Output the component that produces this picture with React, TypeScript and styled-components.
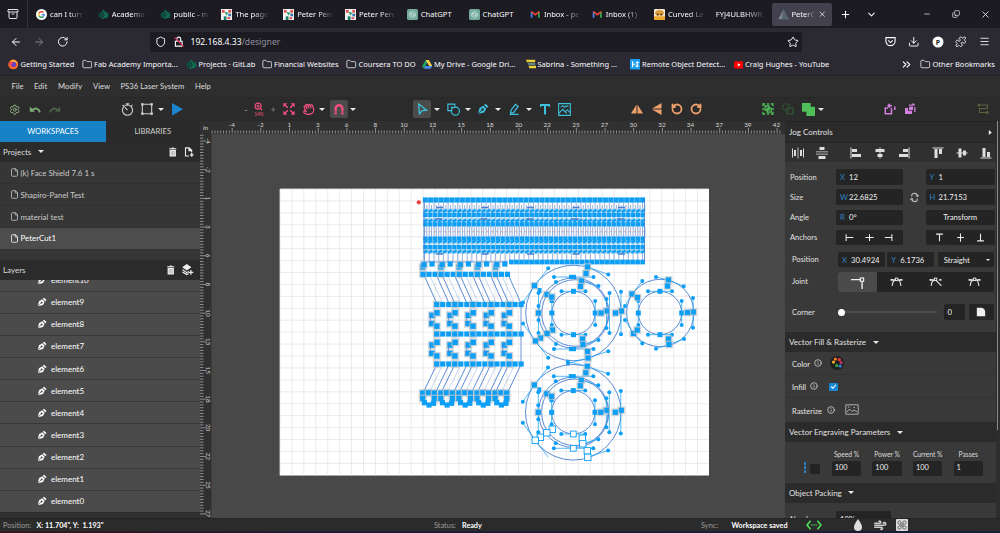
import React from 'react';
import styled, { createGlobalStyle } from 'styled-components';
import {
  Archive, ArrowLeft, ArrowRight, RotateCw, RotateCcw, Shield, Star, Download, Puzzle, Menu, Folder, ChevronsRight,
  ChevronDown, Plus, X, Minus, Copy, Settings, Hand, File, Info, Wind, ZoomIn,
} from 'lucide-react';

const Global = createGlobalStyle`
  * { box-sizing: border-box; }
  body { margin: 0; background: #484848; overflow: hidden; font-family: Lato, sans-serif; color: #dcdcdc; }
  svg { display: block; flex: none; }
`;

const Screen = styled.div`
  width: 1000px; height: 533px; display: flex; flex-direction: column; overflow: hidden;
`;

/* ---------- browser chrome ---------- */
const TabStrip = styled.div`
  height: 28px; flex: none; background: #1c1b22; display: flex; align-items: center; color: #fbfbfe;
  font: 7.6px "Noto Sans", sans-serif;
`;
const Overview = styled.div`
  width: 28px; height: 28px; border-right: 1px solid #34333c; display: flex; align-items: center; justify-content: center;
  margin-right: 2px; padding-right: 1px;
`;
const Tab = styled.div`
  width: 61.8px; height: 24px; display: flex; align-items: center; padding-left: 6px; gap: 3px; flex: none;
`;
const TabTitle = styled.span<{ $w: number; $fade?: boolean }>`
  width: ${p => p.$w}px; white-space: nowrap; line-height: 14px;
  ${p => p.$fade !== false && 'mask-image: linear-gradient(90deg, #000 58%, transparent 102%);'}
`;
const ActiveTab = styled.div`
  width: 60px; height: 23px; border-radius: 2px; background: #42414d; display: flex; align-items: center;
  padding: 0 6px 0 6px; gap: 2.5px; margin-left: 0.4px; flex: none;
`;
const ChromeIcon = styled.div<{ $w: number; $dim?: boolean }>`
  width: ${p => p.$w}px; flex: none; display: flex; justify-content: center; align-items: center;
  opacity: ${p => (p.$dim ? 0.4 : 1)};
`;
const Spacer = styled.div<{ $w?: number }>`
  ${p => (p.$w === undefined ? 'flex: 1;' : `width: ${p.$w}px; flex: none;`)}
`;
const NavBar = styled.div`
  height: 27px; flex: none; background: #2b2a33; display: flex; align-items: center; color: #fbfbfe; padding-left: 4px;
`;
const UrlField = styled.div`
  width: 652px; height: 20px; background: #1c1b22; border-radius: 2px; display: flex; align-items: center;
  font: 8.6px "Noto Sans", sans-serif; padding: 1px 1px 0 2px;
`;
const Dim = styled.span` color: #8f8f9d; `;
const Bookmarks = styled.div`
  height: 19.5px; flex: none; background: #2b2a33; color: #fbfbfe; display: flex; align-items: center; padding: 0 0 1px 8px;
  font: 7.5px "Noto Sans", sans-serif; 
`;
const Bookmark = styled.div<{ $w: number }>`
  width: ${p => p.$w}px; display: flex; align-items: center; gap: 2px; white-space: nowrap; flex: none;
`;

/* ---------- application bars ---------- */
const MenuBar = styled.div`
  height: 22px; flex: none; background: #2e2e2e; border-top: 1px solid #242424; display: flex; align-items: center;
  font-size: 7.7px; padding: 0 0 0 11.5px;
`;
const MenuItem = styled.span<{ $w: number }>` width: ${p => p.$w}px; white-space: nowrap; `;
const Toolbar = styled.div`
  height: 24.5px; flex: none; background: #2b2b2b; display: flex; align-items: center; padding: 0 0 0 5px;
  border-top: 1px solid #282828;
`;
const Tool = styled.div<{ $w: number; $c?: string; $on?: boolean; $ml?: number }>`
  width: ${p => p.$w}px; height: 18px; flex: none; display: flex; align-items: center; justify-content: center;
  margin-left: ${p => p.$ml ?? 0}px; color: ${p => p.$c ?? '#ddd'}; font-size: 9px;
  background: ${p => (p.$on ? '#4b4b4b' : 'transparent')}; border-radius: 2px;
`;
const Caret = styled.i<{ $s?: number }>`
  border: ${p => p.$s ?? 3}px solid transparent; border-top-color: #e8e8e8; border-bottom: 0; flex: none;
`;
const ZoomReadout = styled.div`
  display: flex; flex-direction: column; align-items: center; font-size: 4.8px; line-height: 5px; gap: 1px;
`;
const Main = styled.div` flex: 1; min-height: 0; display: flex; `;

/* ---------- left sidebar ---------- */
const Sidebar = styled.div` width: 200px; flex: none; display: flex; flex-direction: column; background: #363636; overflow: hidden; `;
const SideTabs = styled.div` display: flex; height: 20.5px; flex: none; border-bottom: 1px solid #1a5d8a; font-size: 7.7px; `;
const SideTab = styled.div<{ $on?: boolean }>`
  width: ${p => (p.$on ? 105.5 : 94.5)}px; height: 20.5px; display: flex; align-items: center; justify-content: center;
  background: ${p => (p.$on ? '#1783c6' : '#2a2a2a')}; color: ${p => (p.$on ? '#fff' : '#d0d0d0')};
`;
const SideHeader = styled.div<{ $h: number }>`
  height: ${p => p.$h}px; flex: none; background: #2b2b2b; display: flex; align-items: center; padding: 0 6.5px 0 3px; font-size: 8px; gap: 6.5px;
`;
const Project = styled.div<{ $on?: boolean }>`
  height: ${p => (p.$on ? 21.5 : 22)}px; flex: none; display: flex; align-items: center; gap: 1.5px; padding-left: 10px; font-size: 7.9px;
  background: ${p => (p.$on ? '#4d4d4d' : '#363636')}; color: ${p => (p.$on ? '#fff' : '#cacaca')};
  border-bottom: 1px solid #313131;
`;
const Layers = styled.div`
  height: 233px; flex: none; overflow: hidden; display: flex; flex-direction: column; justify-content: flex-end;
  border-bottom: 1px solid #2c2c2c;
`;
const Layer = styled.div`
  height: 22.15px; flex: none; background: #4b4b4b; border-top: 1px solid #383838; color: #fff; font-size: 8px;
  display: flex; align-items: center; padding-left: 37px; gap: 4px;
`;
const SideFoot = styled.div` height: 4.5px; flex: none; background: #303030; `;

/* ---------- canvas ---------- */
const Stage = styled.div` width: 585px; flex: none; overflow: hidden; background: #484848; `;

/* ---------- right panel ---------- */
const Panel = styled.div`
  flex: 1; min-width: 0; background: #393939; display: flex; flex-direction: column; overflow: hidden; font-size: 7.5px;
  border-top: 1px solid #232323;
`;
const PanelHeader = styled.div<{ $mt?: number; $h?: number }>`
  height: ${p => p.$h ?? 20}px; margin-top: ${p => p.$mt ?? 0}px; flex: none; background: #2b2b2b; display: flex; align-items: center;
  padding: 0 7px 0 4px; gap: 6.5px; font-size: 8px; color: #e2e2e2;
`;
const AlignBar = styled.div`
  height: 20px; flex: none; background: #303030; border-top: 1px solid #262626; display: flex; align-items: center; color: #e4e4e4;
`;
const Row = styled.div<{ $h: number; $mt?: number; $indent?: number; $line?: boolean }>`
  height: ${p => p.$h}px; margin-top: ${p => p.$mt ?? 0}px; padding-left: ${p => p.$indent ?? 5}px; flex: none; display: flex; align-items: center;
  ${p => p.$line && 'border-bottom: 1px solid #323232;'}
`;
const RowLabel = styled.span<{ $w: number }>` width: ${p => p.$w}px; flex: none; color: #e0e0e0; white-space: nowrap; `;
const LowLabel = styled.span` padding-top: 3px; color: #e4e4e4; `;
const Field = styled.div<{ $w: number; $ml?: number; $center?: boolean }>`
  width: ${p => p.$w}px; height: 15.5px; margin-left: ${p => p.$ml ?? 0}px; flex: none; background: #242424; border-radius: 2px;
  display: flex; align-items: center; padding: 0 4px; font-size: 7.7px; color: #eee; white-space: nowrap;
  justify-content: ${p => (p.$center ? 'space-around' : 'flex-start')};
`;
const Axis = styled.b` color: #2f86c2; font-weight: 400; width: 9px; flex: none; font-size: 7.6px; `;
const Joints = styled.div` width: 156px; height: 20px; background: #242424; display: flex; border-radius: 2px; overflow: hidden; `;
const Joint = styled.div<{ $on?: boolean }>`
  flex: 1; display: flex; align-items: center; justify-content: center; background: ${p => (p.$on ? '#4b4b4b' : 'transparent')};
`;
const Track = styled.div` width: 96px; height: 2px; background: #4e4e4e; display: flex; align-items: center; margin-left: 3px; `;
const Knob = styled.i` width: 7px; height: 7px; border-radius: 50%; background: #fff; margin-left: -3px; `;
const Check = styled.div`
  width: 8.5px; height: 8.5px; background: #1787d0; display: flex; align-items: center; justify-content: center; border-radius: 1px; margin-top: 2px;
`;
const Param = styled.div<{ $ml?: number }>`
  width: 30px; margin-left: ${p => p.$ml ?? 10.6}px; display: flex; flex-direction: column; align-items: center; font-size: 6.7px; gap: 2px;
  white-space: nowrap; line-height: 9px; padding-top: 1.5px;
`;
const ParamField = styled.div`
  width: 29.5px; height: 14.5px; background: #242424; border-radius: 2px; padding-left: 3px; line-height: 14.5px; font-size: 7.4px; color: #eee;
`;
const Swatch = styled.div` width: 10px; height: 10px; background: #232323; border-radius: 1px; margin: 13px 0 0 4px; `;
const Blues = styled.div`
  width: 2px; height: 12px; margin: 12px 0 0 14px; background: repeating-linear-gradient(#2b7fc0 0 3px, #393939 3px 4px);
`;
const PanelWrap = styled.div` flex: 1; display: flex; min-width: 0; background: #2d2d2d; `;
const ScrollTrack = styled.div` width: 4px; flex: none; background: #2d2d2d; `;
const ScrollThumb = styled.div` width: 1px; height: 309px; margin-left: 1px; background: #898989; `;

/* ---------- status ---------- */
const Status = styled.div`
  height: 13.5px; flex: none; background: #2b2b2b; display: flex; align-items: center; font-size: 7.6px; color: #9a9a9a; padding: 1px 0 0 3px;
  border-top: 1px solid #242424; white-space: nowrap;
`;
const Strong = styled.b<{ $w: number }>` color: #fff; font-weight: 700; width: ${p => p.$w}px; font-size: 7.2px; white-space: pre; `;
const Faint = styled.span<{ $w: number }>` width: ${p => p.$w}px; font-size: 7.4px; `;
const OsEdge = styled.div` height: 2px; flex: none; background: linear-gradient(90deg, #33191c, #1b1d33 30%, #191f33); `;

/* ---------- icons ---------- */
const Svg = ({ s = 12, children, ...r }: any) => (
  <svg width={s} height={s} viewBox="0 0 12 12" fill="none" stroke="currentColor" strokeWidth={1} {...r}>{children}</svg>
);
const Pen = ({ s = 10, fill = 'currentColor', hole = '#4b4b4b' }: { s?: number; fill?: string; hole?: string }) => (
  <Svg s={s} stroke="none">
    <path d="M1 11 L2.4 5 L6.2 2.8 L9.2 5.8 L7.2 9.6 Z" fill={fill} />
    <path d="M7 2 L8.4 .8 L11.4 3.6 L10 5 Z" fill={fill} />
    <circle cx="5.6" cy="6.5" r="1.2" fill={hole} /><path d="M1 11 L5 7" stroke={hole} strokeWidth=".8" />
  </Svg>
);
const Google = () => (
  <Svg s={11}>
    <circle cx="6" cy="6" r="6" fill="#fff" stroke="none" />
    <path d="M8.2 3.9A3 3 0 0 0 3.4 4.5" stroke="#ea4335" strokeWidth="1.5" /><path d="M3.4 4.5a3 3 0 0 0 0 3" stroke="#fbbc05" strokeWidth="1.5" />
    <path d="M3.4 7.5A3 3 0 0 0 8 8.3" stroke="#34a853" strokeWidth="1.5" /><path d="M8 8.3A3 3 0 0 0 9 6.1H6" stroke="#4285f4" strokeWidth="1.4" />
  </Svg>
);
const Fab = () => (
  <Svg s={11} stroke="none">
    <path d="M6 .5 L9 4.5 L3 4.5Z" fill="#0e6b52" /><circle cx="3.8" cy="6.6" r="3.2" fill="#0c4b40" /><circle cx="8" cy="6.6" r="3.4" fill="#10664f" />
    <path d="M4 10l2-6 3.4 3-3.4 4z" fill="#127a5c" /><path d="M6 3.5v6.5M3.4 6.3l2.6 2 2.6-3" stroke="#1c2b2b" strokeWidth=".8" />
  </Svg>
);
const Mosaic = () => (
  <Svg s={11} stroke="none">
    <rect width="12" height="12" fill="#f2f2f2" /><path d="M1 1h3v3H1z" fill="#e2504a" /><path d="M8 1h3v3H8z" fill="#e2504a" />
    <path d="M4 3l4 1-2 3z" fill="#1f9a6c" /><path d="M3 8h3v4H3z" fill="#16806a" /><path d="M8 5h3v3H8z" fill="#3478b8" /><path d="M7 9h3v2H7z" fill="#de4c48" />
  </Svg>
);
const Gpt = () => (
  <Svg s={11}>
    <rect width="12" height="12" rx="2" fill="#74aa9c" stroke="none" />
    <path d="M6 2.5l3 1.8v3.5L6 9.6 3 7.8V4.3zM4.5 3.4v3.4L6 7.7l3-1.8M7.5 8.7V5.2L6 4.4 3 6.1" stroke="#e8f2ef" strokeWidth=".6" />
  </Svg>
);
const Gmail = () => (
  <Svg s={10.5} strokeWidth="2">
    <path d="M1.8 10V3" stroke="#4285f4" /><path d="M10.2 10V3" stroke="#34a853" /><path d="M1.4 3L6 6.5 10.6 3" stroke="#ea4335" />
  </Svg>
);
const Face = () => (
  <Svg s={11} stroke="none">
    <rect width="12" height="12" rx="1" fill="#f3e6cf" /><path d="M1 5a5 4 0 0 1 10 0l-2 2H3z" fill="#dd9b3b" />
    <rect y="8" width="12" height="4" fill="#eda52b" /><circle cx="4" cy="6" r="1" fill="#5a3418" /><circle cx="8" cy="6" r="1" fill="#5a3418" />
  </Svg>
);
const Prism = () => (
  <Svg s={11} stroke="none"><path d="M6 .5L.3 11.2h11.4z" fill="#7d8794" /><path d="M6 .5L4.2 11.2h7.5z" fill="#59636f" /></Svg>
);
const Firefox = () => (
  <Svg s={10.5} stroke="none">
    <circle cx="6" cy="6.2" r="5.6" fill="#ff6a2b" /><path d="M3 1.5Q8 0 11 4.5L8 6z" fill="#ffc13a" /><circle cx="6.4" cy="6" r="3" fill="#6b3fc9" />
    <path d="M1 4q3-2 5 1-3 0-3 3z" fill="#ff4552" />
  </Svg>
);
const Drive = () => (
  <Svg s={10.5} stroke="none">
    <path d="M4.2 1h3.6L3.7 8.2 2 11 .2 7.9z" fill="#1fa463" /><path d="M4.2 1h3.6l4 7H8.2z" fill="#ffd04b" /><path d="M2 11l1.8-3h8L10 11z" fill="#4688f1" />
  </Svg>
);
const Yellow = () => (
  <Svg s={10} stroke="none"><path d="M0 1h11v3H1z" fill="#e8d43a" /><path d="M2 5h9v2H3z" fill="#77a7a4" /><path d="M3 8h9v3H4z" fill="#e8d43a" /></Svg>
);
const Remote = () => (
  <Svg s={10.5} stroke="#fff" strokeWidth="1.3"><rect width="12" height="12" fill="#1a9bf0" stroke="none" /><path d="M3 2.5v7M3 6h3M6.5 4h4M8.3 2.5v7M6 8h4" /></Svg>
);
const Play = () => <Svg s={9.5} stroke="none"><rect y="1.5" width="12" height="9.2" rx="2" fill="#f00" /><path d="M4.8 4v4.2L8.4 6z" fill="#fff" /></Svg>;
const FolderIcon = () => <Folder size={10.5} strokeWidth={1.7} />;
const Trash = () => (
  <Svg s={9.5} stroke="none"><path d="M1.5 1.5h3l.5-1h2l.5 1h3v1.4h-9z" fill="#eee" /><path d="M2 3.6h8V12H2z" fill="#eee" /><path d="M4.2 5v5.6M6 5v5.6M7.8 5v5.6" stroke="#777" strokeWidth=".6" /></Svg>
);
const PageAdd = () => (
  <Svg s={10} stroke="#eee" strokeWidth="1.3"><path d="M6 10.8H1.8V1h4.4l3 3v2.5M6 1v3.3h3.2" /><path d="M9.3 7.3v4.4M7.1 9.5h4.4" strokeWidth="1.5" /></Svg>
);
const LayerAdd = () => (
  <Svg s={11.5} stroke="none"><path d="M5 0l4.8 3.4L5 6.8.2 3.4z" fill="#eee" /><path d="M.5 6L5 9l2-1.3M.5 8.3L5 11l2-1" stroke="#eee" strokeWidth="1.2" /><path d="M9.3 6.3v5M6.8 8.8h5" stroke="#eee" strokeWidth="1.3" /></Svg>
);

/* ---------- toolbar ---------- */
const CY = '#3cc0dc', PK = '#ee4f7f', OR = '#eda06b', GR = '#4fbf59', PU = '#d27fdf';
const Tools = () => (
  <Toolbar>
    <Tool $w={20} $c="#8db585"><Settings size={11.5} strokeWidth={2} /></Tool>
    <Tool $w={20} $c="#7fae78"><Svg s={12}><path d="M3 7.2Q8.6 3 11 9.3" strokeWidth="1.9" /><path d="M.8 3.6v5.1h5z" fill="currentColor" stroke="none" /></Svg></Tool>
    <Tool $w={20} $c="#4c6449"><Svg s={12}><path d="M9 7.2Q3.4 3 1 9.3" strokeWidth="1.9" /><path d="M11.2 3.6v5.1h-5z" fill="currentColor" stroke="none" /></Svg></Tool>
    <Tool $w={20} $ml={52} $c="#d0d0d0"><Svg s={13}><circle cx="6" cy="6.6" r="4.7" /><path d="M6 6.6L3.6 4M6 .4v1.6M4.4.8h3.2M9.5 2.8l1.1-1.1M1.4 1.8l1.2 1.2" /></Svg></Tool>
    <Tool $w={20} $c="#d0d0d0"><Svg s={14}><path d="M2 2h8v8H2z" strokeWidth=".9" />{[[1, 1], [9, 1], [1, 9], [9, 9]].map(([x, y]) => <rect key={x + '-' + y} x={x} y={y} width="2" height="2" fill="currentColor" stroke="none" />)}</Svg></Tool>
    <Tool $w={8}><Caret /></Tool>
    <Tool $w={24} $c="#1c86cf"><Svg s={12.5} stroke="none"><path d="M1 0l10.6 6L1 12z" fill="currentColor" /></Svg></Tool>
    <Tool $w={12} $ml={51} $c="#aaa">-</Tool>
    <Tool $w={14} $c={PK}><ZoomReadout><ZoomIn size={9} strokeWidth={3} />14%</ZoomReadout></Tool>
    <Tool $w={14} $c="#888">+</Tool>
    <Tool $w={18} $c={PK}><Svg s={12} strokeWidth={1.5}><path d="M1.5 1.5l3.3 3.3M10.5 1.5L7.2 4.8M1.5 10.5l3.3-3.3M10.5 10.5L7.2 7.2" /><path d="M.3.3h4L.3 4.3zM11.7.3v4l-4-4zM.3 11.7v-4l4 4zM11.7 11.7h-4l4-4z" fill="currentColor" stroke="none" /></Svg></Tool>
    <Tool $w={20} $c={PK}><Hand size={12.5} strokeWidth={2.4} style={{ transform: 'rotate(-20deg)' }} /></Tool>
    <Tool $w={8}><Caret /></Tool>
    <Tool $w={18} $ml={4} $on $c={PK}><Svg s={12}><path d="M2.6 11.5V5.6a3.4 3.4 0 0 1 6.8 0v5.9" strokeWidth="2.4" /><path d="M1 9h3.4M7.6 9H11" stroke="#4b4b4b" strokeWidth=".8" /></Svg></Tool>
    <Tool $w={10}><Caret /></Tool>
    <Tool $w={18} $ml={55} $on $c={CY}><Svg s={12}><path d="M2.6 1l8 6.2-4.3.4-2.8 3.2z" strokeWidth="1.3" /></Svg></Tool>
    <Tool $w={12}><Caret /></Tool>
    <Tool $w={20} $c={CY}><Svg s={13} strokeWidth="1.1"><path d="M4 7H.8V1h6.4v2.4" /><path d="M3.4 3.6l2 1" /><circle cx="7.8" cy="7.5" r="3.7" /></Svg></Tool>
    <Tool $w={9}><Caret /></Tool>
    <Tool $w={22} $c={CY}><Pen s={12} hole="#2b2b2b" /></Tool>
    <Tool $w={8}><Caret /></Tool>
    <Tool $w={24} $c={CY}><Svg s={12} strokeWidth="1.3"><path d="M7.5 1.5l2.6 1.8L5.6 9.6 2.6 10l.4-2.8zM1.6 11.3h9" /></Svg></Tool>
    <Tool $w={6}><Caret /></Tool>
    <Tool $w={25} $c={CY}><Svg s={12} strokeWidth="2"><path d="M1.5 2h9M6 2v9.5" /><path d="M1.6 1v3M10.4 1v3" strokeWidth="1.2" /></Svg></Tool>
    <Tool $w={14} $c={CY}><Svg s={13}><path d="M.6.6h10.8v10.8H.6zM.8 9.5l3.5-3.7L8 9.6M6.6 8.2l2-2 2.6 2.6M2.4 3.8l2.2-1.4 1.5 1.7 2-1.7 1.6 1.2" /></Svg></Tool>
    <Tool $w={20} $ml={56} $c={OR}><Svg s={12} stroke="none"><path d="M5.5 1.5v9H0zM6.5 1.5v9H12z" fill="currentColor" /></Svg></Tool>
    <Tool $w={20} $c={OR}><Svg s={12} stroke="none"><path d="M10.5 5.5h-9.5L10.5 0zM10.5 6.5h-9.5l9.5 5.5z" fill="currentColor" /></Svg></Tool>
    <Tool $w={19} $c={OR}><RotateCcw size={12} strokeWidth={3.6} /></Tool>
    <Tool $w={19} $c={OR}><RotateCw size={12} strokeWidth={3.6} /></Tool>
    <Tool $w={20} $ml={53} $c={GR}><Svg s={12} strokeWidth="1.3"><path d="M1 3.2V1h2.2M8.8 1H11v2.2M11 8.8V11H8.8M3.2 11H1V8.8M5 1h2M5 11h2M1 5v2M11 5v2" /><path d="M3 3h4v4H3zM5.2 5.2h4v4h-4z" /></Svg></Tool>
    <Tool $w={20} $c="#2d5c32"><Svg s={12} strokeWidth="1.2"><path d="M1 1h6v6H1z" strokeDasharray="2 1" /><path d="M5 5h6v6H5z" /></Svg></Tool>
    <Tool $w={20} $c={GR}><Svg s={13} stroke="none"><path d="M0 0h8v3.5h4V12H4V8H0z" fill="currentColor" /></Svg></Tool>
    <Tool $w={6}><Caret /></Tool>
    <Tool $w={20} $ml={56} $c={PU}><Svg s={12} strokeWidth="1.5"><path d="M7.5 5v5.8H1.3V5H4" /><path d="M4 2.8h4M6 .8L4 2.8l2 2M10.8 7V3.5" /></Svg></Tool>
    <Tool $w={20} $c={PU}><Svg s={12} stroke="none"><path d="M1 5h3v2.8h4V11H1z" fill="currentColor" /><path d="M5 3.6h4V7H5z" fill="currentColor" /><path d="M5 2.2h4.6M8.6.4l2 1.8M10.8 4v5" stroke="currentColor" strokeWidth="1.3" /></Svg></Tool>
    <Tool $w={20} $ml={53} $c="#62623f"><Svg s={12} strokeWidth="1.1"><path d="M3 2h7.5v3.5h-8V9.5H9" /><circle cx="1.8" cy="2" r="1" /><circle cx="10.3" cy="9.6" r="1.1" /></Svg></Tool>
  </Toolbar>
);

/* ---------- design surface ---------- */
const BLUE = '#0c9ff5', LINE = '#4a7fd0';
type P = [number, number];
const Sq = ({ x, y, s = 5, halo, open }: { x: number; y: number; s?: number; halo?: boolean; open?: boolean }) => (
  <g>
    {halo && <rect x={x - s / 2 - 1.3} y={y - s / 2 - 1.3} width={s + 2.6} height={s + 2.6} fill="#b9c2c8" opacity=".65" />}
    <rect x={x - s / 2} y={y - s / 2} width={s} height={s} fill={open ? '#fff' : BLUE} stroke={open ? BLUE : 'none'} strokeWidth=".9" />
  </g>
);
const range = (n: number) => Array.from({ length: n }, (_, i) => i);
const combRows: P[] = [[215, 210.8], [224.3, 220.5], [238.6, 241.6], [247, 251.6]];

const Comb = () => (
  <g>
    {range(47).map(i => {
      const x = 424.5 + i * 4.74;
      return (
        <g key={i}>
          <path d={`M${x} 200V262M${x + 2.3} 205V210M${x + 2.3} 227V238`} stroke="#6d8fce" strokeWidth=".7" />
          <path d={`M${x} 231.7h2.6`} stroke="#c08a96" strokeWidth=".6" />
        </g>
      );
    })}
    <rect x="423" y="197.2" width="222" height="5.6" fill="#b9d9ee" />
    {range(42).map(i => <Sq key={i} x={425.3 + i * 5.3} y={200} s={4.9} />)}
    {combRows.map(([y, z]) => (
      <g key={y}>
        <rect x={423} y={Math.min(y, z) - 2.2} width={222} height={Math.abs(y - z) + 4.4} fill="#a9d3ee" />
        {range(46).map(i => (
          <g key={i}>
            <Sq x={425.4 + i * 4.83} y={y} s={4.2} />
            <path d={`M${423.8 + i * 4.83} ${z + 1.2}L${427.4 + i * 4.83} ${z - 1}`} stroke={BLUE} strokeWidth="2.4" />
          </g>
        ))}
      </g>
    ))}
    <rect x="510" y="259.6" width="135" height="4.8" fill="#b9d9ee" />
    {range(27).map(i => <Sq key={i} x={511.4 + i * 5.05} y={262} s={4.6} />)}
    {range(5).map(i => (
      <path key={i} d={`M${436 + i * 45.5} 207.5h7m-8 11.5h7m-6 35h7`} stroke="#4d7fd0" strokeWidth="1.3" />
    ))}
    <path d="M424 200V262M644.5 200V262" stroke={LINE} strokeWidth=".8" />
  </g>
);

const Fingers = () => (
  <g>
    {range(5).map(k => {
      const x = k * 18;
      return (
        <g key={k} stroke={LINE} strokeWidth=".9">
          {[0, 12.3].map(d => (
            <path key={d} d={`M${424.5 + x + d} 276L${437 + x + d} 304M${437 + x + d} 364L${423.5 + x + d} 392`} />
          ))}
          <path d={`M${430 + x} 276L${443 + x} 304M${443 + x} 364L${429.5 + x} 392`} opacity=".35" />
        </g>
      );
    })}
    <path d="M521 304V364M425 262H508" stroke={LINE} strokeWidth=".8" fill="none" />
    {range(5).map(k => {
      const x = k * 18.2;
      const pts: P[] = [[422.7, 267], [424, 264.5], [432, 264]];
      return <g key={k}>{pts.map(([a, b]) => <Sq key={a} x={a + x} y={b} s={5.2} halo={a < 424.5} />)}</g>;
    })}
    {range(15).map(i => <Sq key={i} x={423 + i * 6.03} y={274.3} s={5.2} halo={i % 3 === 0} />)}
    {[304.5, 334, 364].map(y => range(15).map(i => <Sq key={y + '-' + i} x={436.7 + i * 6.03} y={y} s={5.2} halo={i % 3 === 0} />))}
    {range(5).map(k => {
      const pts: P[] = [[432, 315.3], [437, 312.8], [431.8, 323.6], [436.8, 326.2], [432, 345], [437, 342.3], [431.8, 353.4], [436.8, 356]];
      return <g key={k}>{pts.map(([a, b]) => <Sq key={b} x={a + k * 18.1} y={b} s={5.4} halo />)}<path d={`M${430.5 + k * 18.1} 315V324M${430.5 + k * 18.1} 345V353`} stroke={LINE} strokeWidth=".7" /></g>;
    })}
    {range(5).map(k => {
      const pts: P[] = [[422.7, 393], [428.5, 392.7], [434.3, 393], [422.7, 398.5], [434.3, 398.5], [424.4, 402.7], [429, 405], [433.6, 403.3]];
      return <g key={k}>{pts.map(([a, b], i) => <Sq key={i} x={a + k * 18.1} y={b} s={5.2} halo={i < 5} />)}</g>;
    })}
  </g>
);

const innerDots: P[] = [[-12, -21.7], [12, -21.7], [-12, 21.7], [12, 21.7], [-21.7, -12], [-21.7, 12], [21.7, -12], [21.7, 12]];
const innerSquares: P[] = [[0, -21.7], [-21.7, 0], [21.7, 0]];
const Hub = ({ open }: { open?: boolean }) => (
  <g>
    <circle r="21.6" fill="none" stroke={LINE} strokeWidth=".9" />
    <path d="M-12-21.7H12M-12 21.7H12M-21.7-12V12M21.7-12V12" stroke={BLUE} strokeWidth=".7" />
    {innerDots.map(([x, y], i) => <circle key={i} cx={x} cy={y} r="2" fill={BLUE} />)}
    {innerSquares.map(([x, y], i) => <Sq key={i} x={x} y={y} />)}
    <Sq x={0} y={21.7} open={open} s={open ? 5.8 : 5} />
  </g>
);
const Wheel = ({ x, y, open }: { x: number; y: number; open?: boolean }) => {
  const dots: P[] = [[-19.5, -36], [20, -36], [-19.5, 36], [20, 36], [-35, -20], [-35, -7], [-35, 7], [-35, 20], [36, -20], [36, 20], [25, -27],
    [25, 27], [33, -14], [33, 15], [-17.5, -31], [47.5, -21.3], [47.5, 21.3], [34.8, -38.5], [34.8, 38.2], [-25.3, -44.7], [-50.5, -10.5],
    [-50.5, 10.5], [-5.5, open ? -50.5 : 50.5], [-17.5, 31], ...(open ? [] : [[-25.3, 44.7] as P])];
  const upper: P[] = [[8, -32], [7, -26.5], [14, -46], [12.5, -39.5], [-26.5, -18.5], [-21.7, -16], [-39, -27.3], [33, -2], [27.5, 0], [48, -2], [42, 0], [-35, 0]];
  const lower: P[] = [[9, 26], [9.5, 31.5], [14, 38.5], [14.5, 45], [-21, 17], [-26.5, 20.5], [-33, 25], [-38, 28]];
  return (
    <g transform={`translate(${x} ${y})`}>
      <g fill="none" stroke={LINE} strokeWidth=".9">
        <circle r="47.8" /><circle r="35.2" cx=".3" /><circle r="33.3" cx="1.5" />
      </g>
      <path d="M-19.5-36H20M-19.5 36H20M-35-20V20M36-20V20M47.5-21.3V21.3M14-46L34.8-38.5M14 45L34.8 38.2M8-32L25-27M9.5 31.5L25 27M-39-27.3L-50.5-10.5M-38 28L-50.5 10.5M-39-27.3L-25.3-44.7M-38 28L-25.3 44.7M33-14V15" stroke={BLUE} strokeWidth=".7" fill="none" />
      {open ? <path d="M-5.5-50.5L14-46" stroke={BLUE} strokeWidth=".7" /> : <path d="M-5.5 50.5L14 45" stroke={BLUE} strokeWidth=".7" />}
      <Hub open={open} />
      {dots.map(([a, b], i) => <circle key={i} cx={a} cy={b} r="2" fill={BLUE} />)}
      <path d="M-34-25V-20M-21.7-16V-10" stroke={BLUE} strokeWidth="4" />
      {upper.map(([a, b], i) => <Sq key={i} x={a} y={b} s={5.2} halo />)}
      <rect x="-4.5" y="-38.2" width="7" height="4.2" fill={BLUE} />
      {!open && <rect x="-4.5" y="34" width="7" height="4.2" fill={BLUE} />}
      {lower.map(([a, b], i) => <Sq key={i} x={a} y={b} s={open ? 6.4 : 5.2} halo={!open} open={open} />)}
      {open && <Sq x={0} y={36} s={5.8} open />}
    </g>
  );
};
const SmallWheel = () => {
  const dots: P[] = [[-17.7, -32], [-4, -36], [23.7, -26.7], [33, -15], [33, 14.7], [24, 26], [-4, 35.7], [-17.7, 30.5], [-35, -7], [-35, 7]];
  const sq: P[] = [[8.5, -33], [7.5, -27], [8.5, 26], [9, 31.5], [-28, -19], [-22.5, -15.5], [-26.5, 20.5], [-22.7, 17], [33.3, -1], [27.5, -0.5]];
  return (
    <g transform="translate(660 313)">
      <circle r="33.7" cx=".3" fill="none" stroke={LINE} strokeWidth=".9" />
      <path d="M-4-36L8.5-33L23.7-26.7M-4 35.7L9 31.5L24 26M33-15V14.7M-35-7L-28-19L-17.7-32M-35 7L-26.5 20.5L-17.7 30.5" stroke={BLUE} strokeWidth=".7" fill="none" />
      <Hub />
      {dots.map(([a, b], i) => <circle key={i} cx={a} cy={b} r="2" fill={BLUE} />)}
      {sq.map(([a, b], i) => <Sq key={i} x={a} y={b} s={5.2} halo />)}
    </g>
  );
};
const rulerNums = ['-4', '-2', '1', '3', '6', '8', '10', '13', '15', '18', '20', '22', '25', '27', '30', '32', '34', '37', '39', '42'];

const Design = () => (
  <svg width="585" height="397" viewBox="200 121 585 397">
    <rect x="200" y="121" width="585" height="397" fill="#484848" />
    <rect x="200" y="121" width="585" height="13" fill="#303030" />
    <rect x="200" y="121" width="11.5" height="397" fill="#303030" />
    <g stroke="#9a9a9a" strokeWidth=".9">
      {range(199).map(i => { const x = 212.1 + i * 2.868; return <path key={i} d={`M${x} ${(i - 7) % 10 === 0 ? 127.8 : 130.6}V133.5`} />; })}
      {range(133).map(i => { const y = 135.3 + i * 2.868; return <path key={i} d={`M200 ${y}H${(i - 2) % 10 === 0 ? 206 : 203.5}`} />; })}
    </g>
    <g fill="#d6d6d6" fontFamily="Lato, sans-serif" fontSize="6.4" textAnchor="middle">
      {rulerNums.map((n, i) => <text key={n} x={232 + i * 28.66} y={126.8}>{n}</text>)}
      {rulerNums.slice(0, 14).map((n, i) => <text key={n} transform={`translate(206.4 ${141 + i * 28.66}) rotate(90)`}>{n}</text>)}
      <text x="205.5" y="129.5" fontSize="6.5">in</text>
    </g>
    <rect x="280" y="189" width="429" height="286.5" fill="#fff" />
    <g stroke="#e6e6e9" strokeWidth=".8">
      {range(36).map(i => <path key={i} d={`M${280 + i * 11.93} 189V475.5`} />)}
      {range(24).map(i => <path key={i} d={`M280 ${189 + i * 11.93}H709`} />)}
    </g>
    <Comb />
    <Fingers />
    <Wheel x={573.5} y={313} />
    <SmallWheel />
    <Wheel x={573.3} y={412.3} open />
    <circle cx="418.8" cy="202.3" r="2.1" fill="#ee3b3b" />
  </svg>
);

const AlignIcon = ({ d, w, ml = 0 }: { d: string; w: number; ml?: number }) => (
  <Tool $w={w} $ml={ml}><Svg s={12} stroke="currentColor" strokeWidth="0"><path d={d} fill="currentColor" /></Svg></Tool>
);
const Anchor = ({ d }: { d: string }) => <Svg s={9} strokeWidth="1.4"><path d={d} /></Svg>;
const Curve = ({ d }: { d: string }) => (
  <Svg s={13} stroke="#e4e4e4"><path d={d} /><rect x="5" y="2.9" width="2.2" height="2.2" fill="#242424" strokeWidth=".9" /><path d="M.5 3.6h2v1.8h-2zM9.5 3.6h2v1.8h-2z" fill="#e4e4e4" stroke="none" /></Svg>
);
const InfoDot = () => <Info size={8} strokeWidth={2.2} />;

export default function App() {
  return (
    <Screen>
      <Global />
      <TabStrip>
        <Overview><Archive size={12} strokeWidth={1.8} /></Overview>
        <Tab><Google /><TabTitle $w={33}>can I turn</TabTitle></Tab>
        <Tab><Fab /><TabTitle $w={33}>Academa</TabTitle></Tab>
        <Tab><Fab /><TabTitle $w={35}>public - m</TabTitle></Tab>
        <Tab><Mosaic /><TabTitle $w={33}>The page</TabTitle></Tab>
        <Tab><Mosaic /><TabTitle $w={36}>Peter Pere</TabTitle></Tab>
        <Tab><Mosaic /><TabTitle $w={36}>Peter Pere</TabTitle></Tab>
        <Tab><Gpt /><TabTitle $w={36} $fade={false}>ChatGPT</TabTitle></Tab>
        <Tab><Gpt /><TabTitle $w={36} $fade={false}>ChatGPT</TabTitle></Tab>
        <Tab><Gmail /><TabTitle $w={36}>Inbox - pe</TabTitle></Tab>
        <Tab><Gmail /><TabTitle $w={35}>Inbox (1)</TabTitle></Tab>
        <Tab><Face /><TabTitle $w={36}>Curved La</TabTitle></Tab>
        <Tab><TabTitle $w={49}>FYJ4ULBHWR</TabTitle></Tab>
        <ActiveTab><Prism /><TabTitle $w={25}>PeterC</TabTitle><X size={8.5} strokeWidth={2} /></ActiveTab>
        <ChromeIcon $w={27}><Plus size={11} strokeWidth={2.2} /></ChromeIcon>
        <ChromeIcon $w={26}><ChevronDown size={11} strokeWidth={2.2} /></ChromeIcon>
        <Spacer $w={29} />
        <ChromeIcon $w={26}><Minus size={8} strokeWidth={2} /></ChromeIcon>
        <ChromeIcon $w={32}><Copy size={8} strokeWidth={2} style={{ transform: 'scaleY(-1)' }} /></ChromeIcon>
        <ChromeIcon $w={27}><X size={11} strokeWidth={1.7} /></ChromeIcon>
      </TabStrip>
      <NavBar>
        <ChromeIcon $w={23}><ArrowLeft size={12} strokeWidth={2} /></ChromeIcon>
        <ChromeIcon $w={24} $dim><ArrowRight size={12} strokeWidth={2} /></ChromeIcon>
        <ChromeIcon $w={23}><RotateCw size={11.5} strokeWidth={2} /></ChromeIcon>
        <Spacer $w={76} />
        <UrlField>
          <ChromeIcon $w={18}><Shield size={11.5} strokeWidth={2} /></ChromeIcon>
          <ChromeIcon $w={18}><Svg s={11.5}><path d="M2.5 5.5h7v5h-7zM4 5.5V3.2a2 2 0 0 1 4 0v2.3" strokeWidth="1.2" /><path d="M1.5 1.5l9.5 9.5" stroke="#e22850" strokeWidth="1.2" /></Svg></ChromeIcon>
          <Spacer $w={2.5} /><span>192.168.4.33<Dim>/designer</Dim></span>
          <Spacer />
          <ChromeIcon $w={17}><Star size={12} strokeWidth={1.9} /></ChromeIcon>
        </UrlField>
        <Spacer $w={77} />
        <ChromeIcon $w={23}><Svg s={11} strokeWidth="1.2"><path d="M1 1.8h10v3.7a5 5 0 0 1-10 0z" /><path d="M3.5 4.8L6 7.2l2.5-2.4" /></Svg></ChromeIcon>
        <ChromeIcon $w={24}><Download size={11.5} strokeWidth={2} /></ChromeIcon>
        <ChromeIcon $w={23}><Svg s={12} stroke="none"><circle cx="6" cy="6" r="5.5" fill="#fff" /><text x="6" y="8.6" fontSize="7" fontWeight="700" textAnchor="middle" fill="#222" fontFamily="Noto Sans, sans-serif">P</text></Svg></ChromeIcon>
        <ChromeIcon $w={24}><Puzzle size={11.5} strokeWidth={1.8} /></ChromeIcon>
        <ChromeIcon $w={23}><Menu size={11} strokeWidth={1.8} /></ChromeIcon>
      </NavBar>
      <Bookmarks>
        <Bookmark $w={73.5}><Firefox />Getting Started</Bookmark>
        <Bookmark $w={104}><FolderIcon />Fab Academy Importa...</Bookmark>
        <Bookmark $w={76}><Fab />Projects · GitLab</Bookmark>
        <Bookmark $w={84.5}><FolderIcon />Financial Websites</Bookmark>
        <Bookmark $w={75.5}><FolderIcon />Coursera TO DO</Bookmark>
        <Bookmark $w={104}><Drive />My Drive - Google Dri...</Bookmark>
        <Bookmark $w={104}><Yellow />Sabrina - Something ...</Bookmark>
        <Bookmark $w={104}><Remote />Remote Object Detect...</Bookmark>
        <Bookmark $w={100}><Play />Craig Hughes - YouTube</Bookmark>
        <Spacer />
        <ChromeIcon $w={27}><ChevronsRight size={13} strokeWidth={2} /></ChromeIcon>
        <Bookmark $w={80}><FolderIcon />Other Bookmarks</Bookmark>
      </Bookmarks>

      <MenuBar>
        <MenuItem $w={22.5}>File</MenuItem><MenuItem $w={24}>Edit</MenuItem><MenuItem $w={35}>Modify</MenuItem>
        <MenuItem $w={27.5}>View</MenuItem><MenuItem $w={74.5}>PS36 Laser System</MenuItem><MenuItem $w={30}>Help</MenuItem>
      </MenuBar>
      <Tools />

      <Main>
        <Sidebar>
          <SideTabs><SideTab $on>WORKSPACES</SideTab><SideTab>LIBRARIES</SideTab></SideTabs>
          <SideHeader $h={20.5}>Projects <Caret $s={3} /><Spacer /><Trash /><PageAdd /></SideHeader>
          {['(k) Face Shield 7.6 1 s', 'Shapiro-Panel Test', 'material test', 'PeterCut1'].map((n, i) => (
            <Project key={n} $on={i === 3}><File size={9} strokeWidth={2.1} />{n}</Project>
          ))}
          <Spacer />
          <SideHeader $h={20}>Layers<Spacer /><Trash /><LayerAdd /></SideHeader>
          <Layers>
            {range(11).map(i => <Layer key={i}><Pen s={10} />element{10 - i}</Layer>)}
          </Layers>
          <SideFoot />
        </Sidebar>
        <Stage><Design /></Stage>
        <PanelWrap>
          <Panel>
            <PanelHeader>Jog Controls<Spacer /><Svg s={5} stroke="none" style={{ marginRight: -4 }}><path d="M2 0l7 6-7 6z" fill="#eee" /></Svg></PanelHeader>
            <AlignBar>
              <AlignIcon w={24} ml={1} d="M0 1.5h1v9H0zM2 3h2v6H2zM5.6.5h.8v11h-.8zM8 3h2v6H8zM11 1.5h1v9h-1z" />
              <AlignIcon w={24} d="M3.5 0h5v3h-5zM0 4.4h12v.8H0zM0 6.8h12v.8H0zM2.5 9h7v3h-7z" />
              <AlignIcon w={24} ml={10} d="M.5.5h1v11h-1zM2 2h5v3H2zM2 7h9v3H2z" />
              <AlignIcon w={24} d="M5.5.5h1v11h-1zM1.5 2h9v3h-9zM3.5 7h5v3h-5z" />
              <AlignIcon w={24} d="M10.5.5h1v11h-1zM5 2h5v3H5zM1 7h9v3H1z" />
              <AlignIcon w={24} ml={10} d="M.5.5h11v1H.5zM2.5 2h3v9h-3zM7 2h3v5H7z" />
              <AlignIcon w={24} d="M.5 5.5h11v1H.5zM2.5 1.5h3v9h-3zM7 3.5h3v5H7z" />
              <AlignIcon w={24} d="M.5 10.5h11v1H.5zM2.5 1h3v9h-3zM7 5h3v5H7z" />
            </AlignBar>
            <Row $h={20} $mt={5}><RowLabel $w={46}>Position</RowLabel><Field $w={66.5}><Axis>X</Axis>12</Field><Field $w={69.5} $ml={23}><Axis>Y</Axis>1</Field></Row>
            <Row $h={20}><RowLabel $w={46}>Size</RowLabel><Field $w={66.5}><Axis>W</Axis>22.6825</Field>
              <Tool $w={23} $c="#bbb"><Svg s={11} strokeWidth="1.2"><path d="M3 5V3.5Q3 1.5 6 1.5T9.2 4.6M3 7.2Q3 10.5 6 10.5T9 8.5V7M7.6 3.6l1.6 1.4 1.6-1.4M1.5 8.4L3 7l1.5 1.4" /></Svg></Tool>
              <Field $w={69.5}><Axis>H</Axis>21.7153</Field></Row>
            <Row $h={20.5}><RowLabel $w={46}>Angle</RowLabel><Field $w={66.5}><Axis>R</Axis>0°</Field><Field $w={69.5} $ml={23} $center>Transform</Field></Row>
            <Row $h={19.5}><RowLabel $w={46}>Anchors</RowLabel>
              <Field $w={66.5} $center><Anchor d="M1.5 1.5v9M1.5 6H11" /><Anchor d="M6 1.5v9M.5 6h11" /><Anchor d="M10.5 1.5v9M1 6h9.5" /></Field>
              <Field $w={69.5} $ml={23} $center><Anchor d="M1.5 1.5h9M6 1.5V11" /><Anchor d="M1.5 6h9M6 .5v11" /><Anchor d="M1.5 10.5h9M6 10.5V1" /></Field></Row>
            <Row $h={20} $mt={2.5} $indent={7}><RowLabel $w={46}>Position</RowLabel>
              <Field $w={46.5}><Axis>X</Axis>30.4924</Field><Field $w={46.5} $ml={2.7}><Axis>Y</Axis>6.1736</Field>
              <Field $w={56} $ml={4}><span style={{ paddingLeft: 2 }}>Straight</span><Spacer /><Caret $s={2.4} /></Field></Row>
            <Row $h={20} $mt={2} $indent={7}><RowLabel $w={46}>Joint</RowLabel>
              <Joints>
                <Joint $on><Svg s={14} stroke="#eee"><path d="M0 4h8M9.5 5.5V12" strokeWidth="1.2" /><rect x="8" y="2.6" width="2.8" height="2.8" /></Svg></Joint>
                <Joint><Curve d="M1.5 4.5h9M2 10Q2.5 4.6 6 4.3T10 10" /></Joint>
                <Joint><Curve d="M1 4.5h5L11.5 10M2 10Q2.5 4.6 6 4.3" /></Joint>
                <Joint><Curve d="M1.5 4.5h9M2 10Q2.5 4.6 6 4.3T10 10" /></Joint>
              </Joints></Row>
            <Row $h={20} $mt={10.5} $indent={7}><RowLabel $w={46}>Corner</RowLabel><Track><Knob /></Track>
              <Field $w={21.5} $ml={6.5}>0</Field>
              <Field $w={25} $ml={3.5} $center><Svg s={10} stroke="none"><path d="M1 1h5a5 5 0 0 1 5 5v5H1z" fill="#eee" /></Svg></Field></Row>
            <PanelHeader $mt={10}>Vector Fill &amp; Rasterize<Caret /></PanelHeader>
            <Row $h={23} $indent={7} $line><LowLabel>Color</LowLabel><Spacer $w={4.5} /><InfoDot /><Spacer $w={8} />
              <Svg s={14} stroke="none"><circle cx="6" cy="6" r="6" fill="#1f1f1f" />{[['#e8a92c', 3, 5.2], ['#f07c27', 4.6, 2.6], ['#e43c35', 8, 3.2], ['#c12f6b', 9.6, 5.6], ['#2d7fd0', 8.8, 8.6], ['#34a34a', 5.8, 8.2]].map(([c, x, y]) => <circle key={c} cx={x} cy={y} r="1.4" fill={c as string} />)}</Svg></Row>
            <Row $h={22.5} $indent={7} $line><LowLabel>Infill</LowLabel><Spacer $w={4} /><InfoDot /><Spacer $w={11} /><Check><Svg s={7} stroke="#fff" strokeWidth="2"><path d="M2 6l3 3 5-6" /></Svg></Check></Row>
            <Row $h={24.5} $indent={7}><LowLabel>Rasterize</LowLabel><Spacer $w={4.5} /><InfoDot /><Spacer $w={10} />
              <svg width="14" height="11" viewBox="0 0 14 11" fill="none" stroke="#bbb"><path d="M.8.8h12.4v9.4H.8zM2 8l2.5-3L7 7.5 9 6l3 2M3 3h1.5M8.5 3.5h1.5" strokeWidth=".9" /></svg></Row>
            <PanelHeader>Vector Engraving Parameters<Caret /></PanelHeader>
            <Row $h={40.5}><Blues /><Swatch />
              <Param $ml={11.5}>Speed %<ParamField>100</ParamField></Param><Param>Power %<ParamField>100</ParamField></Param>
              <Param>Current %<ParamField>100</ParamField></Param><Param>Passes<ParamField>1</ParamField></Param></Row>
            <PanelHeader>Object Packing<Caret /></PanelHeader>
            <Row $h={22} $mt={5.5} $indent={5}><RowLabel $w={46}>Numbers</RowLabel><Field $w={55}>10%</Field></Row>
          </Panel>
          <ScrollTrack><ScrollThumb /></ScrollTrack>
        </PanelWrap>
      </Main>

      <Status>
        <Faint $w={33.5}>Position:</Faint><Strong $w={397.5}>{'X: 11.704", Y:  1.193"'}</Strong>
        <Faint $w={28}>Status:</Faint><Strong $w={239}>Ready</Strong><Faint $w={30.5}>Sync:</Faint><Strong $w={74}>Workspace saved</Strong>
        <Svg s={16} stroke="#4ed957" strokeWidth="1.3"><path d="M3.4 2.8L.8 6l2.6 3.2M8.6 2.8L11.2 6 8.6 9.2M4 6h.8M5.6 6h.8M7.2 6H8" /></Svg>
        <Spacer $w={30} />
        <Svg s={12} stroke="none"><path d="M6 0Q10 5.5 10 8a4 4 0 0 1-8 0Q2 5.5 6 0" fill="#ddd" /></Svg>
        <Spacer $w={10} /><Wind size={12.5} color="#ccc" strokeWidth={3} style={{ transform: 'scaleX(1.05)' }} /><Spacer $w={9.5} />
        <Svg s={12}><rect width="12" height="12" rx="1" fill="#dcdcdc" stroke="none" /><g stroke="#555" strokeWidth=".9"><circle cx="6" cy="6" r="1.2" /><circle cx="3.5" cy="3.5" r="1.6" /><circle cx="8.5" cy="3.5" r="1.6" /><circle cx="3.5" cy="8.5" r="1.6" /><circle cx="8.5" cy="8.5" r="1.6" /></g></Svg>
      </Status>
      <OsEdge />
    </Screen>
  );
}
